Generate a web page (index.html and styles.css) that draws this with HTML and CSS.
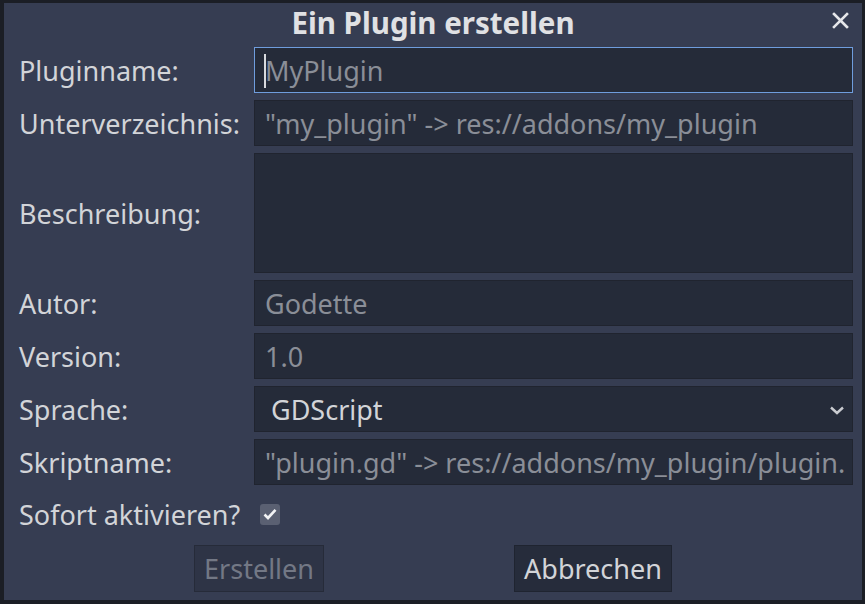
FILE: index.html
```html
<!DOCTYPE html>
<html lang="de">
<head>
<meta charset="utf-8">
<title>Ein Plugin erstellen</title>
<link rel="stylesheet" href="styles.css">
</head>
<body>
<div class="dialog">
  <div class="titlebar">
    <span class="title">Ein Plugin erstellen</span>
    <span class="close" aria-label="Schließen">
      <svg width="17" height="17" viewBox="0 0 17 17"><path d="M2 2 L15 15 M15 2 L2 15" stroke="#e6e7ea" stroke-width="2.6" stroke-linecap="square" fill="none"/></svg>
    </span>
  </div>
  <div class="form">
    <label class="lbl">Pluginname:</label>
    <div class="field focus"><span class="caret"></span><span class="ph">MyPlugin</span></div>

    <label class="lbl">Unterverzeichnis:</label>
    <div class="field"><span class="ph">"my_plugin" -&gt; res://addons/my_plugin</span></div>

    <label class="lbl">Beschreibung:</label>
    <div class="field area"></div>

    <label class="lbl">Autor:</label>
    <div class="field"><span class="ph">Godette</span></div>

    <label class="lbl">Version:</label>
    <div class="field"><span class="ph">1.0</span></div>

    <label class="lbl">Sprache:</label>
    <div class="field select"><span class="val">GDScript</span>
      <svg class="chev" width="16" height="11" viewBox="0 0 16 11"><path d="M2 2.5 L8 8 L14 2.5" stroke="#c9cbd0" stroke-width="2.4" fill="none" stroke-linejoin="miter"/></svg>
    </div>

    <label class="lbl">Skriptname:</label>
    <div class="field"><span class="ph">"plugin.gd" -&gt; res://addons/my_plugin/plugin.</span></div>

    <div class="check-row">
      <span class="lbl">Sofort aktivieren?</span>
      <span class="checkbox">
        <svg width="14" height="12" viewBox="0 0 14 12"><path d="M1.5 6.5 L5 10 L12.5 1.8" stroke="#f2f3f5" stroke-width="2.6" fill="none"/></svg>
      </span>
    </div>
  </div>
  <div class="buttons">
    <span class="btn disabled">Erstellen</span>
    <span class="btn">Abbrechen</span>
  </div>
</div>
</body>
</html>
```
FILE: styles.css
```css
* { box-sizing: border-box; }
html, body { margin: 0; padding: 0; }
body {
  width: 865px;
  height: 604px;
  background: #1b1e25;
  font-family: "Noto Sans", "DejaVu Sans", sans-serif;
  overflow: hidden;
  padding: 3px 3px 4px 4px;
}
.dialog {
  width: 858px;
  height: 597px;
  background: #363d52;
  display: flex;
  flex-direction: column;
}
.titlebar {
  height: 44px;
  display: flex;
  align-items: center;
  justify-content: center;
  position: relative;
}
.title {
  font-weight: bold;
  font-size: 29.5px;
  color: #e0e1e4;
  margin-top: -6px;
}
.close {
  position: absolute;
  right: 13px;
  top: 9px;
  display: flex;
}
.form {
  display: grid;
  grid-template-columns: 235px 1fr;
  grid-template-rows: 46px 46px 120px 46px 46px 46px 46px 44px;
  row-gap: 7px;
  padding: 0 9px 0 15px;
}
.lbl {
  font-size: 27px;
  color: #d2d4d8;
  display: flex;
  align-items: center;
  white-space: nowrap;
}
.field {
  background: #252b39;
  border: 1px solid #20242f;
  display: flex;
  align-items: center;
  padding-left: 10px;
  font-size: 27px;
  white-space: nowrap;
  overflow: hidden;
  position: relative;
}
.field.focus { border-color: #6f9ddd; }
.caret {
  position: absolute;
  left: 9px;
  top: 6px;
  width: 2px;
  height: 34px;
  background: #d8dade;
}
.ph { color: #8a8e97; }
.val { color: #d2d4d8; }
.select { padding-left: 16px; justify-content: space-between; padding-right: 7px; }
.chev { margin-top: 2px; }
.check-row {
  grid-column: 1 / 3;
  display: flex;
  align-items: center;
  gap: 20px;
}
.checkbox {
  width: 20px;
  height: 21px;
  border-radius: 3px;
  background: #5a6072;
  display: flex;
  align-items: center;
  justify-content: center;
}
.buttons {
  margin-top: 9px;
  display: flex;
  justify-content: space-evenly;
}
.btn {
  height: 47px;
  padding: 0 9px;
  display: flex;
  align-items: center;
  font-size: 27px;
  color: #d2d4d8;
  background: #262c3b;
  border: 1px solid #1f2430;
}
.btn.disabled {
  color: #737885;
  background: #2e3446;
  border-color: #262b39;
}
```
